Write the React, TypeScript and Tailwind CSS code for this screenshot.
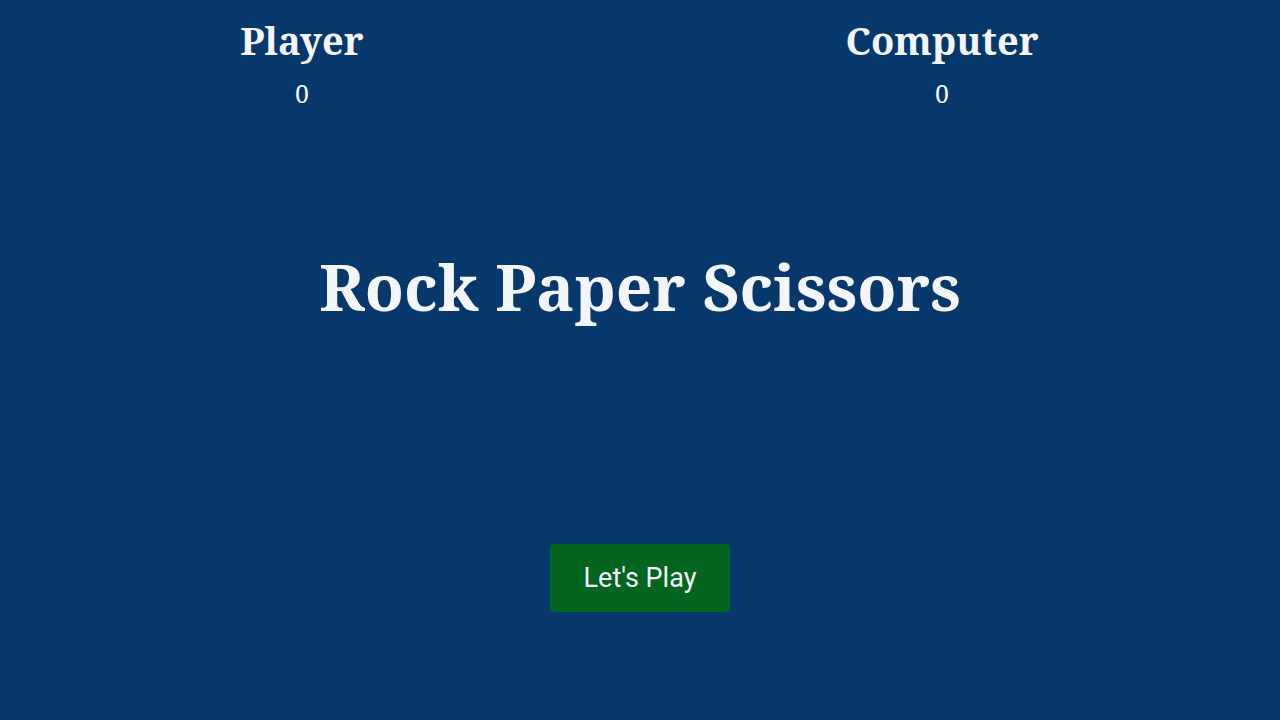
import React from 'react';

const serif = { fontFamily: '"Noto Serif", "DejaVu Serif", serif' };

export default function App() {
  return (
    <div className="min-h-screen w-full bg-[#06386b] text-[#f3f5f8] flex flex-col">
      <div className="grid grid-cols-2 gap-[36px] pr-[36px] pt-[14px]" style={serif}>
        <div className="flex flex-col items-center">
          <h2 className="text-[38px] font-bold leading-[52px]">Player</h2>
          <p className="text-[25px] leading-[30px] mt-[12px]">0</p>
        </div>
        <div className="flex flex-col items-center">
          <h2 className="text-[38px] font-bold leading-[52px]">Computer</h2>
          <p className="text-[25px] leading-[30px] mt-[12px]">0</p>
        </div>
      </div>
      <h1 className="text-center text-[64px] font-bold leading-[90px] mt-[134px]" style={serif}>
        Rock Paper Scissors
      </h1>
      <div className="flex justify-center mt-[212px]">
        <button
          className="w-[180px] h-[68px] rounded-[4px] bg-[#03651f] text-[27px] text-[#f3f5f8]"
          style={{ fontFamily: 'Roboto, sans-serif' }}
        >
          Let's Play
        </button>
      </div>
    </div>
  );
}
